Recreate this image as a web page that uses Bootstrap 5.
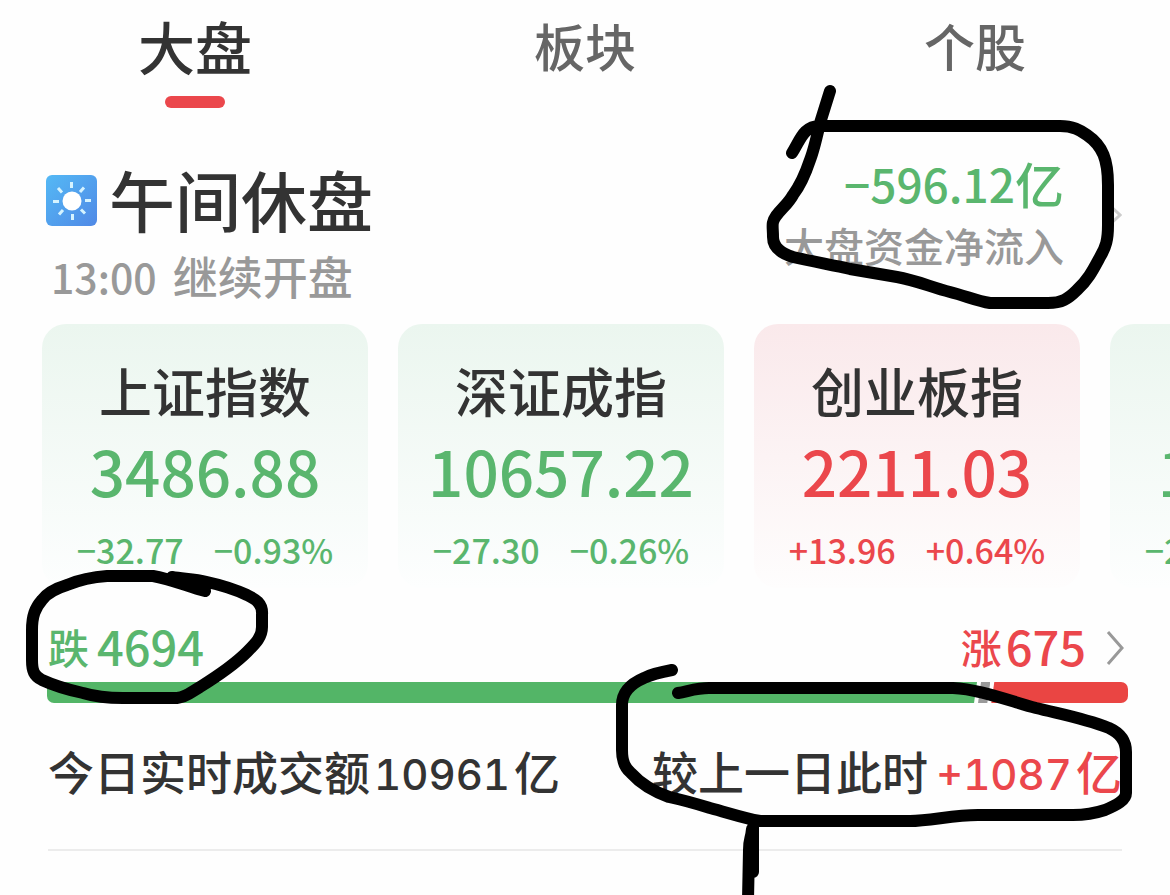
<!DOCTYPE html>
<html lang="zh-CN">
<head>
<meta charset="utf-8">
<meta name="viewport" content="width=device-width, initial-scale=1">
<title>大盘</title>
<link href="https://cdn.jsdelivr.net/npm/bootstrap@5.3.0/dist/css/bootstrap.min.css" rel="stylesheet">
<style>
  :root { --fall: #5ab66e; --rise: #eb474c; --ink: #333; --muted: #999; }
  body { font-family: "Noto Sans CJK SC", sans-serif; font-weight: 500; color: var(--ink); background: #fefefe; }
  .screen { overflow: hidden; }
  .fall { color: var(--fall); }
  .rise { color: var(--rise); }
  .tab-link { font-size: 51px; line-height: 90px; color: #666; text-decoration: none; }
  .tab-link.active { font-size: 57px; color: var(--ink); }
  .tab-link.active::after { content: ""; display: block; width: 60px; height: 12px; margin: 6px auto 0; border-radius: 6px; background: var(--rise); }
  .summary { padding: 45px 48px 24px 46px; }
  .session { padding-top: 9px; }
  .session-title { gap: 12px; }
  .session-icon { margin-top: 4px; }
  .session h1 { font-size: 66px; line-height: 72px; font-weight: 500; }
  .reopen { font-size: 45px; line-height: 48px; margin-top: 18px; padding-left: 5px; gap: 16px; color: var(--muted); }
  .reopen-time { font-size: 41px; }
  .flow-link { gap: 38px; text-decoration: none; }
  .flow-value { font-size: 49px; line-height: 60px; }
  .flow-digits { font-size: 46px; }
  .flow-label { font-size: 40px; line-height: 48px; margin-top: 8px; color: var(--muted); }
  .indices { gap: 30px; padding-left: 42px; overflow: hidden; }
  .index-card { flex: 0 0 28.9%; padding: 34px 0 14px; border-radius: 24px; text-align: center; white-space: nowrap; text-decoration: none; background: linear-gradient(#ebf6ef, #fdfefe); }
  .index-card.up { background: linear-gradient(#fae9eb, #fefdfd); }
  .index-card h2 { font-size: 53px; line-height: 64px; font-weight: 500; color: var(--ink); }
  .index-value { font-size: 62px; line-height: 80px; margin-top: 8px; }
  .index-change { font-size: 34px; line-height: 48px; margin-top: 16px; gap: 30px; }
  .breadth { padding: 28px 46px 0 48px; line-height: 60px; }
  .breadth-word { font-size: 41px; }
  .breadth-count { font-size: 47px; }
  .breadth-bar { height: 21px; gap: 1px; margin: 6px 42px 0 47px; border-radius: 7px; overflow: hidden; }
  .seg-fall { background: #53b567; clip-path: polygon(0 0, 100% 0, calc(100% - 3px) 100%, 0 100%); }
  .seg-flat { background: #999; clip-path: polygon(3px 0, 100% 0, calc(100% - 3px) 100%, 0 100%); }
  .seg-rise { background: #ea4543; clip-path: polygon(3px 0, 100% 0, 100% 100%, 0 100%); }
  .turnover { margin: 37px 48px 0; padding-bottom: 44px; font-size: 46px; line-height: 60px; border-bottom: 2px solid #ececec; white-space: nowrap; }
  .latin { font-family: Inter, sans-serif; font-size: 42px; font-variant-numeric: tabular-nums; }
  .pen { pointer-events: none; }
</style>
</head>
<body>
<main class="screen position-relative min-vh-100">
  <nav class="row g-0 text-center">
    <div class="col"><a class="tab-link active d-block" href="#market" aria-current="page">大盘</a></div>
    <div class="col"><a class="tab-link d-block" href="#sectors">板块</a></div>
    <div class="col"><a class="tab-link d-block" href="#stocks">个股</a></div>
  </nav>

  <section class="summary d-flex justify-content-between align-items-start">
    <div class="session">
      <div class="session-title d-flex align-items-center">
        <svg class="session-icon" width="51" height="51" viewBox="0 0 51 51" aria-hidden="true">
          <defs><linearGradient id="sky" x1="0" y1="0" x2="1" y2="1"><stop offset="0" stop-color="#54b9f5"/><stop offset="1" stop-color="#5089e6"/></linearGradient></defs>
          <rect width="51" height="51" rx="6" fill="url(#sky)"/>
          <circle cx="26" cy="26" r="9.5" fill="#fff"/>
          <path d="M25.500 7v6M26.500 39v6M7 26.500h6M39 25.500h6M12 13l4 4.500M38 12.500l-4 4.500M13 39.500l4-4.500M39 38.500l-4-4" stroke="#d5f3ff" stroke-width="3"/>
        </svg>
        <h1 class="mb-0">午间休盘</h1>
      </div>
      <div class="reopen d-flex align-items-center"><span class="reopen-time">13:00</span><span>继续开盘</span></div>
    </div>
    <a class="flow-link d-flex align-items-center" href="#flow">
      <span class="text-end">
        <span class="flow-value fall d-flex align-items-center justify-content-end"><span class="flow-digits">−596.12</span>亿</span>
        <span class="flow-label d-block">大盘资金净流入</span>
      </span>
      <svg class="mt-2" width="20" height="34" viewBox="0 0 20 34" fill="none" stroke="#ccc" stroke-width="3" aria-hidden="true"><path d="M2 2l16 15L2 32"/></svg>
    </a>
  </section>

  <section class="indices d-flex">
    <a class="index-card fall" href="#sh">
      <h2 class="mb-0">上证指数</h2>
      <div class="index-value">3486.88</div>
      <div class="index-change d-flex justify-content-center"><span>−32.77</span><span>−0.93%</span></div>
    </a>
    <a class="index-card fall" href="#sz">
      <h2 class="mb-0">深证成指</h2>
      <div class="index-value">10657.22</div>
      <div class="index-change d-flex justify-content-center"><span>−27.30</span><span>−0.26%</span></div>
    </a>
    <a class="index-card up rise" href="#cyb">
      <h2 class="mb-0">创业板指</h2>
      <div class="index-value">2211.03</div>
      <div class="index-change d-flex justify-content-center"><span>+13.96</span><span>+0.64%</span></div>
    </a>
    <a class="index-card fall" href="#kc">
      <h2 class="mb-0">科创50</h2>
      <div class="index-value">1486.33</div>
      <div class="index-change d-flex justify-content-center"><span>−20.39</span><span>−0.37%</span></div>
    </a>
  </section>

  <section>
    <div class="breadth d-flex justify-content-between">
      <div class="fall d-flex align-items-center gap-2"><span class="breadth-word">跌</span><span class="breadth-count">4694</span></div>
      <a class="rise d-flex align-items-center text-decoration-none" href="#breadth">
        <span class="d-flex align-items-center gap-1 me-3 pe-1"><span class="breadth-word">涨</span><span class="breadth-count">675</span></span>
        <svg class="mt-1" width="18" height="34" viewBox="0 0 18 34" fill="none" stroke="#999" stroke-width="3" aria-hidden="true"><path d="M2 1l14 16L2 33"/></svg>
      </a>
    </div>
    <div class="breadth-bar d-flex" role="img" aria-label="跌4694 涨675">
      <div class="seg-fall" style="flex-grow:4694"></div>
      <div class="seg-flat" style="flex-grow:62"></div>
      <div class="seg-rise" style="flex-grow:690"></div>
    </div>
  </section>

  <section class="turnover d-flex justify-content-between">
    <div class="d-flex align-items-baseline gap-1">今日实时成交额<span class="latin">10961</span>亿</div>
    <div class="d-flex align-items-baseline gap-2">较上一日此时<span class="rise d-flex align-items-baseline gap-1"><span class="latin">+1087</span>亿</span></div>
  </section>

  <!-- Pen marks laid over the figures -->
  <svg class="pen position-absolute top-0 start-0 w-100" viewBox="0 0 1170 895" fill="none" stroke="#000" stroke-width="12" stroke-linecap="round" stroke-linejoin="round" aria-hidden="true">
    <path d="M792 153C800 141 803 126 820 126H1060C1073 126 1080 130 1087 135C1103 146 1108 160 1108 185V225C1108 240 1106 247 1100 257C1093 270 1088 280 1077 290C1068 299 1062 303 1048 303H990C977 301 966 296 950 292C931 287 915 280 897 277L850 269C832 265 810 261 793 257C780 253 773 246 773 237C773 226 771 223 776 216C783 207 788 204 793 195C802 183 806 172 810 160C814 150 817 136 820 123L830 91"/>
    <path d="M205 591C189 587 171 579 153 576H107C92 577 79 580 67 585C54 589 47 593 42 600C35 608 32 616 32 630V660C32 671 34 676 42 680C55 686 69 690 83 693C96 697 109 698 123 698H177C187 697 191 692 200 687C216 677 233 666 247 652C256 643 262 637 262 627V615C263 603 255 599 247 595C234 589 221 585 207 582C194 579 184 579 172 577L205 588"/>
    <path d="M672 670C661 672 652 674 644 678C630 684 622 692 622 705V750C622 762 625 768 631 773C640 783 655 792 669 797C683 800 697 804 710 808C729 813 743 818 760 821H910C930 821 953 815 978 815H1073C1087 815 1096 813 1105 810C1117 805 1126 800 1126 793V752C1126 741 1120 733 1109 728C1084 718 1060 714 1036 708C1007 700 978 689 953 688H709C697 688 689 691 678 693"/>
    <path d="M753 827V872M752 829C751 840 749 838 749 850L748 900"/>
  </svg>
</main>
<script src="https://cdn.jsdelivr.net/npm/bootstrap@5.3.0/dist/js/bootstrap.bundle.min.js"></script>
</body>
</html>
